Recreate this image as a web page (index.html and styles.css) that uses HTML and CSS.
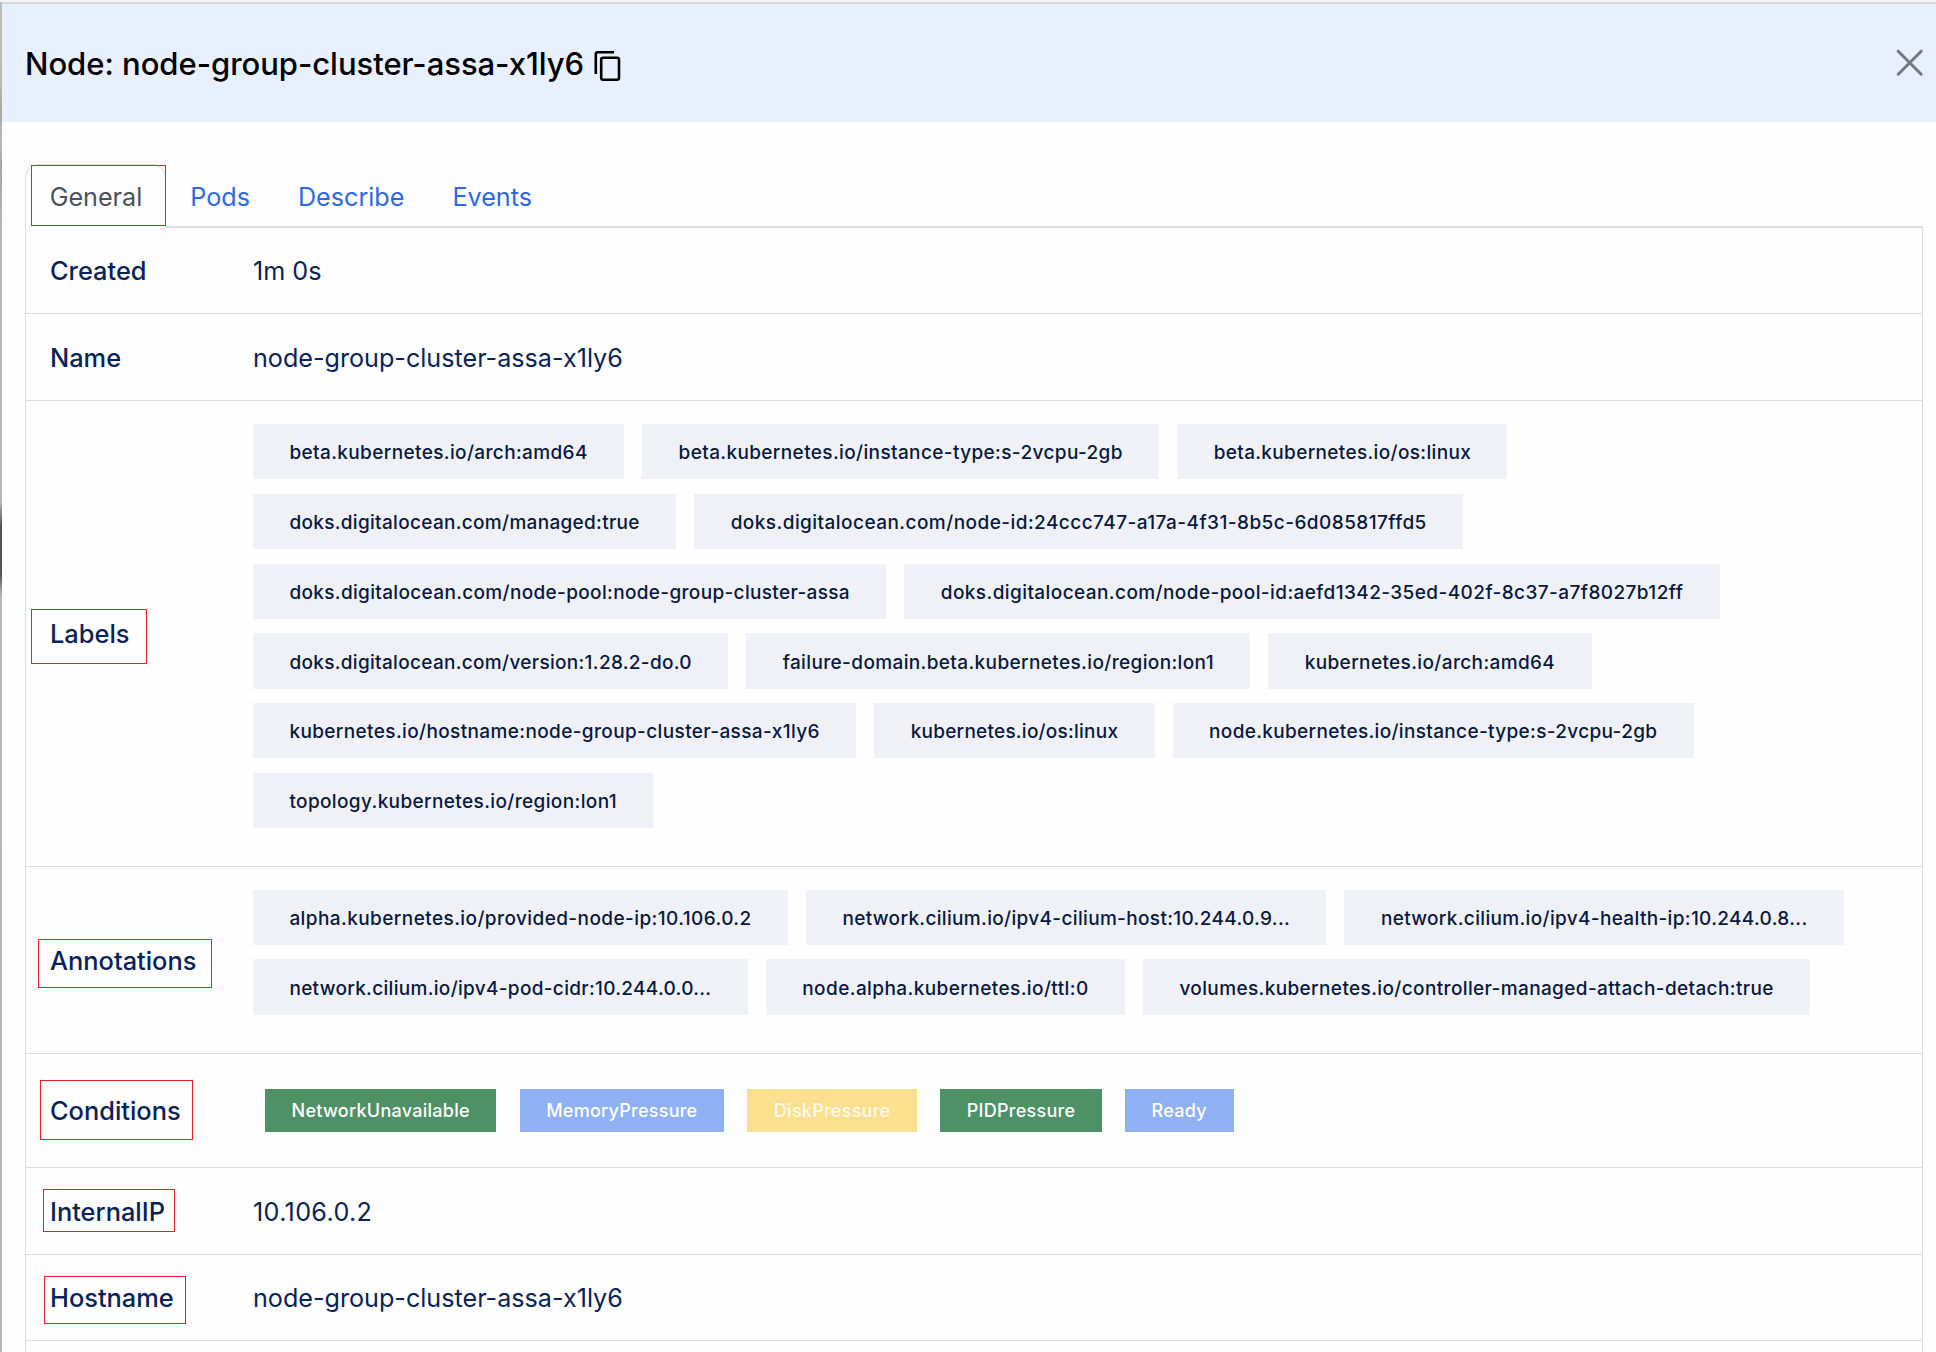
FILE: index.html
```
<!DOCTYPE html>
<html lang="en">
<head>
<meta charset="utf-8">
<title>Node: node-group-cluster-assa-x1ly6</title>
<link rel="stylesheet" href="styles.css">
</head>
<body>
<div class="page">
  <div class="backdrop"></div>
  <main class="drawer">
    <header class="drawer-header">
      <h1 class="title">Node: node-group-cluster-assa-x1ly6</h1>
      <svg class="copy-icon" width="28" height="32" viewBox="0 0 28 32" fill="none" stroke="#000" stroke-width="2.6">
        <path d="M2.8 24V4.3a2 2 0 0 1 2-2H21"/>
        <rect x="8.2" y="7.8" width="17.8" height="22" rx="2"/>
      </svg>
      <svg class="close-icon" width="28" height="28" viewBox="0 0 28 28" fill="none" stroke="#75787e" stroke-width="3" stroke-linecap="round">
        <path d="M2.2 2.2 25.2 25.2M25.2 2.2 2.2 25.2"/>
      </svg>
    </header>
    <div class="content">
      <nav class="tabs">
        <a class="tab active">General<span class="mark mark-general"></span></a>
        <a class="tab">Pods</a>
        <a class="tab">Describe</a>
        <a class="tab">Events</a>
      </nav>
      <section class="details">
        <div class="row row-created"><div class="label">Created</div><div class="value">1m 0s</div></div>
        <div class="row row-name"><div class="label">Name</div><div class="value">node-group-cluster-assa-x1ly6</div></div>
        <div class="row row-chips">
          <div class="label">Labels<span class="mark mark-labels"></span></div>
          <div class="chips">
            <span class="chip">beta.kubernetes.io/arch:amd64</span>
            <span class="chip">beta.kubernetes.io/instance-type:s-2vcpu-2gb</span>
            <span class="chip snug">beta.kubernetes.io/os:linux</span>
            <span class="chip tight">doks.digitalocean.com/managed:true</span>
            <span class="chip loose">doks.digitalocean.com/node-id:24ccc747-a17a-4f31-8b5c-6d085817ffd5</span>
            <span class="chip snug">doks.digitalocean.com/node-pool:node-group-cluster-assa</span>
            <span class="chip roomy">doks.digitalocean.com/node-pool-id:aefd1342-35ed-402f-8c37-a7f8027b12ff</span>
            <span class="chip tight">doks.digitalocean.com/version:1.28.2-do.0</span>
            <span class="chip">failure-domain.beta.kubernetes.io/region:lon1</span>
            <span class="chip">kubernetes.io/arch:amd64</span>
            <span class="chip">kubernetes.io/hostname:node-group-cluster-assa-x1ly6</span>
            <span class="chip tightest">kubernetes.io/os:linux</span>
            <span class="chip snug">node.kubernetes.io/instance-type:s-2vcpu-2gb</span>
            <span class="chip">topology.kubernetes.io/region:lon1</span>
          </div>
        </div>
        <div class="row row-chips row-annotations">
          <div class="label">Annotations<span class="mark mark-annotations"></span></div>
          <div class="chips">
            <span class="chip roomy">alpha.kubernetes.io/provided-node-ip:10.106.0.2</span>
            <span class="chip snug">network.cilium.io/ipv4-cilium-host:10.244.0.9...</span>
            <span class="chip snug">network.cilium.io/ipv4-health-ip:10.244.0.8...</span>
            <span class="chip tight">network.cilium.io/ipv4-pod-cidr:10.244.0.0...</span>
            <span class="chip roomy">node.alpha.kubernetes.io/ttl:0</span>
            <span class="chip">volumes.kubernetes.io/controller-managed-attach-detach:true</span>
          </div>
        </div>
        <div class="row row-conditions">
          <div class="label">Conditions<span class="mark mark-conditions"></span></div>
          <div class="badges">
            <span class="badge green">NetworkUnavailable</span>
            <span class="badge blue">MemoryPressure</span>
            <span class="badge yellow">DiskPressure</span>
            <span class="badge green">PIDPressure</span>
            <span class="badge blue">Ready</span>
          </div>
        </div>
        <div class="row row-ip"><div class="label">InternalIP<span class="mark mark-ip"></span></div><div class="value">10.106.0.2</div></div>
        <div class="row row-host"><div class="label">Hostname<span class="mark mark-host"></span></div><div class="value">node-group-cluster-assa-x1ly6</div></div>
      </section>
    </div>
  </main>
</div>
</body>
</html>
```
FILE: styles.css
```
* { box-sizing: border-box; }

body {
  margin: 0;
  font-family: Inter, "Liberation Sans", sans-serif;
  font-size: 25.15px;
  color: #0a2357;
  background: #fefefe;
}

.page {
  display: flex;
  height: 1352px;
  overflow: hidden;
  border-top: 2px solid #f4f4f4;
}

.backdrop {
  width: 2px;
  background: linear-gradient(#bcbcbc 0, #bababa 80px, #a6a6a6 108px, #bababa 140px, #a8a8a8 165px, #b8b8b8 240px, #b8b8b8 500px, #50545c 524px, #50545c 572px, #b8b8b8 594px, #b6b6b6 100%);
}

.drawer {
  flex: 1;
  display: flex;
  flex-direction: column;
  border-top: 2px solid #d3dadd;
}

.drawer-header {
  display: flex;
  align-items: center;
  height: 118px;
  padding: 2px 12px 0 23px;
  background: #e8effd;
}

.title {
  margin: 0;
  font-size: 31px;
  font-weight: 500;
  line-height: 40px;
  letter-spacing: -0.03px;
  color: #000;
}

.copy-icon { margin: 3px 0 0 9px; }

.close-icon { margin: -3px 0 0 auto; }

.content {
  flex: 1;
  display: flex;
  flex-direction: column;
  padding: 42px 13px 0 23px;
}

.tabs {
  display: flex;
  height: 64px;
  background: linear-gradient(#dcdee3, #dcdee3) 0 100% / 100% 2px no-repeat;
}

.tab {
  position: relative;
  padding: 0 23px;
  border: 1px solid transparent;
  border-bottom: 0;
  line-height: 64px;
  color: #2a6ae6;
}

.tab.active {
  padding-left: 23.7px;
  color: #4a525a;
  background: #fefefe;
  border-color: #dcdee0;
  border-radius: 14px 14px 0 0;
}

.details {
  flex: 1;
  border: solid #dcdcde;
  border-width: 0 1px;
}

.row {
  display: flex;
  align-items: center;
  height: 86px;
  padding: 0 24px;
  border-bottom: 1px solid #dcdcde;
}

.row-created, .row-host { padding-bottom: 1.5px; }

.row-name, .row-ip { height: 87px; }

.row-chips {
  height: auto;
  padding-top: 23px;
  padding-bottom: 23px;
}

.row-annotations { padding-bottom: 24px; }

.row-conditions { height: 114px; }

.label {
  position: relative;
  flex: 0 0 203px;
  padding-top: 2px;
  font-size: 25.4px;
  font-weight: 500;
  line-height: 36px;
}

.row-annotations .label { padding-top: 3px; }

.row-conditions .label { padding-top: 1px; }

.value { padding-top: 2px; }

.row-ip .value { letter-spacing: 0.35px; }

.chips {
  display: flex;
  flex-wrap: wrap;
  column-gap: 18px;
}

.chip {
  margin-bottom: 14.6px;
  padding: 2.2px 36.4px 0;
  background: #f0f1f6;
  color: #07193f;
  font-size: 19px;
  font-weight: 500;
  line-height: 53px;
  letter-spacing: 0.37px;
}

.chip.tightest { letter-spacing: 0.24px; }
.chip.tight { letter-spacing: 0.31px; }
.chip.snug { letter-spacing: 0.335px; }
.chip.roomy { letter-spacing: 0.415px; }
.chip.loose { letter-spacing: 0.447px; }

.badges {
  display: flex;
  gap: 23.2px;
  padding-left: 12px;
}

.badge {
  padding: 0 26.6px;
  color: #fff;
  font-size: 18px;
  font-weight: 500;
  line-height: 43px;
  letter-spacing: 0.26px;
}

.green { background: #4e9167; }
.blue { background: #8fb1f3; }
.yellow { background: #fbe08f; color: #fffaf0; }

/* Highlight frames drawn over the section names */
.mark {
  position: absolute;
  border: 1px solid #e8202a;
}

.mark-general { left: 5px; top: 0; width: 135px; height: 61px; }
.mark-labels { left: -19px; top: -5px; width: 116px; height: 55px; }
.mark-annotations { left: -12px; top: -1px; width: 174px; height: 49px; }
.mark-conditions { left: -10px; top: -12.5px; width: 153px; height: 60px; }
.mark-ip { left: -7px; top: -3px; width: 132px; height: 43px; }
.mark-host { left: -6px; top: -2.3px; width: 142px; height: 48px; }
```
